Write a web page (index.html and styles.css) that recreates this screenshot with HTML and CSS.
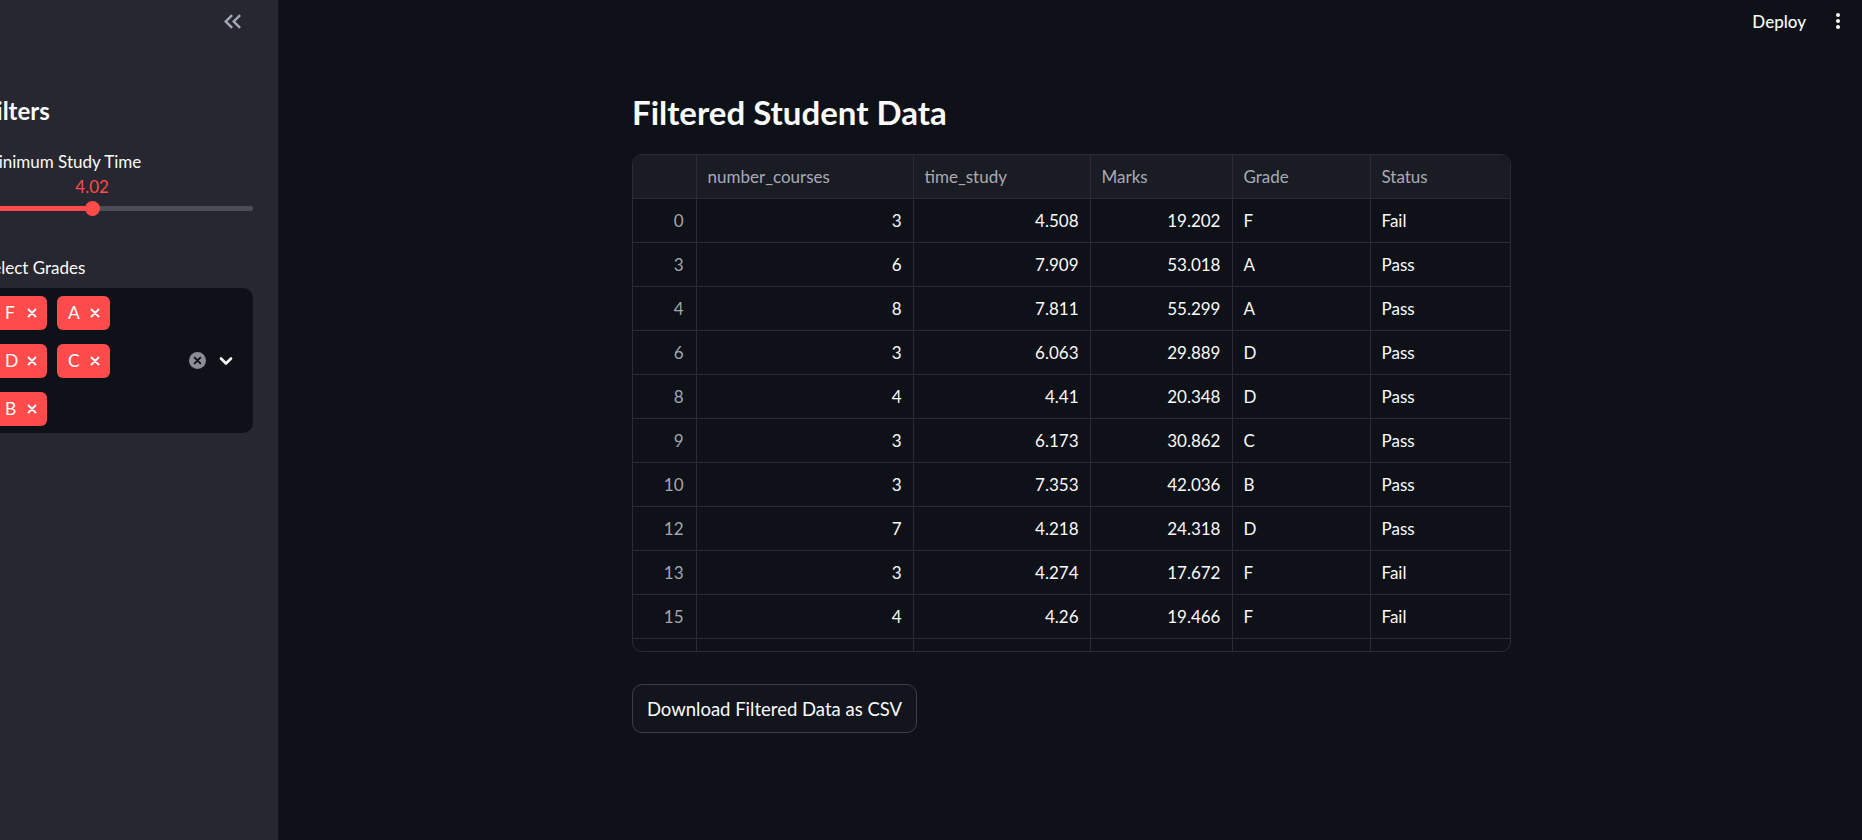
FILE: index.html
```html
<!DOCTYPE html>
<html>
<head>
<meta charset="utf-8">
<link rel="stylesheet" href="styles.css">
</head>
<body>
<aside class="sidebar">
  <div class="sb-top">
    <svg class="collapse" viewBox="0 0 24 24" width="29" height="29"><path d="M17.59 18 19 16.59 14.42 12 19 7.41 17.59 6l-6 6z M11 18l1.41-1.41L7.83 12l4.58-4.59L11 6l-6 6z" fill="currentColor"/></svg>
  </div>
  <div class="sb-content">
    <h2 class="sb-title">Filters</h2>
    <div class="label first">Minimum Study Time</div>
    <div class="slider">
      <div class="track"><div class="fill" style="width:40.4%"></div></div>
      <div class="thumb" style="left:40.4%"></div>
      <div class="value" style="left:40.4%">4.02</div>
    </div>
    <div class="label second">Select Grades</div>
    <div class="multiselect">
      <div class="tags">
        <span class="tag">F<svg class="x" viewBox="0 0 10 10" width="10" height="10"><path d="M1.5 1.5l7 7M8.5 1.5l-7 7" stroke="#fff" stroke-width="1.8" stroke-linecap="round"/></svg></span>
        <span class="tag">A<svg class="x" viewBox="0 0 10 10" width="10" height="10"><path d="M1.5 1.5l7 7M8.5 1.5l-7 7" stroke="#fff" stroke-width="1.8" stroke-linecap="round"/></svg></span>
        <span class="tag">D<svg class="x" viewBox="0 0 10 10" width="10" height="10"><path d="M1.5 1.5l7 7M8.5 1.5l-7 7" stroke="#fff" stroke-width="1.8" stroke-linecap="round"/></svg></span>
        <span class="tag">C<svg class="x" viewBox="0 0 10 10" width="10" height="10"><path d="M1.5 1.5l7 7M8.5 1.5l-7 7" stroke="#fff" stroke-width="1.8" stroke-linecap="round"/></svg></span>
        <span class="tag">B<svg class="x" viewBox="0 0 10 10" width="10" height="10"><path d="M1.5 1.5l7 7M8.5 1.5l-7 7" stroke="#fff" stroke-width="1.8" stroke-linecap="round"/></svg></span>
      </div>
      <div class="ms-icons">
        <svg class="clear" viewBox="0 0 18 18" width="17" height="17"><circle cx="9" cy="9" r="9" fill="#8a8c96"/><path d="M6 6l6 6M12 6l-6 6" stroke="#0e1117" stroke-width="2" stroke-linecap="round"/></svg>
        <svg class="chev" viewBox="0 0 14 10" width="14" height="10"><path d="M2 2.5l5 5 5-5" stroke="#fafafa" stroke-width="2.6" fill="none" stroke-linecap="round" stroke-linejoin="round"/></svg>
      </div>
    </div>
  </div>
</aside>
<main class="main">
  <header class="topbar">
    <span class="deploy">Deploy</span>
    <svg class="kebab" viewBox="0 0 4 16" width="4" height="16"><circle cx="2" cy="2" r="2" fill="#fafafa"/><circle cx="2" cy="8" r="2" fill="#fafafa"/><circle cx="2" cy="14" r="2" fill="#fafafa"/></svg>
  </header>
  <section class="content">
    <h1 class="title">Filtered Student Data</h1>
    <div class="grid-wrap">
      <table class="grid">
        <colgroup>
          <col style="width:63px"><col style="width:217px"><col style="width:177px"><col style="width:142px"><col style="width:138px"><col>
        </colgroup>
        <thead>
          <tr><th></th><th>number_courses</th><th>time_study</th><th>Marks</th><th>Grade</th><th>Status</th></tr>
        </thead>
        <tbody>
          <tr><td class="idx">0</td><td class="num">3</td><td class="num">4.508</td><td class="num">19.202</td><td>F</td><td>Fail</td></tr>
          <tr><td class="idx">3</td><td class="num">6</td><td class="num">7.909</td><td class="num">53.018</td><td>A</td><td>Pass</td></tr>
          <tr><td class="idx">4</td><td class="num">8</td><td class="num">7.811</td><td class="num">55.299</td><td>A</td><td>Pass</td></tr>
          <tr><td class="idx">6</td><td class="num">3</td><td class="num">6.063</td><td class="num">29.889</td><td>D</td><td>Pass</td></tr>
          <tr><td class="idx">8</td><td class="num">4</td><td class="num">4.41</td><td class="num">20.348</td><td>D</td><td>Pass</td></tr>
          <tr><td class="idx">9</td><td class="num">3</td><td class="num">6.173</td><td class="num">30.862</td><td>C</td><td>Pass</td></tr>
          <tr><td class="idx">10</td><td class="num">3</td><td class="num">7.353</td><td class="num">42.036</td><td>B</td><td>Pass</td></tr>
          <tr><td class="idx">12</td><td class="num">7</td><td class="num">4.218</td><td class="num">24.318</td><td>D</td><td>Pass</td></tr>
          <tr><td class="idx">13</td><td class="num">3</td><td class="num">4.274</td><td class="num">17.672</td><td>F</td><td>Fail</td></tr>
          <tr><td class="idx">15</td><td class="num">4</td><td class="num">4.26</td><td class="num">19.466</td><td>F</td><td>Fail</td></tr>
          <tr><td class="idx">16</td><td class="num">5</td><td class="num">5.306</td><td class="num">28.5</td><td>D</td><td>Pass</td></tr>
        </tbody>
      </table>
    </div>
    <button class="dl">Download Filtered Data as CSV</button>
  </section>
</main>
</body>
</html>
```

FILE: styles.css
```css
* { box-sizing: border-box; }
html, body { margin: 0; padding: 0; }
body {
  display: flex;
  height: 840px;
  overflow: hidden;
  background: #0e1117;
  color: #fafafa;
  font-family: "Lato", "Liberation Sans", sans-serif;
}

/* Sidebar */
.sidebar {
  width: 278px;
  flex: none;
  height: 840px;
  background: #262730;
  overflow: hidden;
}
.sb-top {
  height: 42px;
  display: flex;
  justify-content: flex-end;
  align-items: flex-start;
  padding: 7px 31px 0 0;
}
.collapse { color: #a3a8b8; display: block; }
.sb-content {
  margin-left: -17px;
  width: 270px;
}
.sb-title {
  margin: 54px 0 0;
  font-size: 24px;
  line-height: 29px;
  font-weight: 700;
}
.label {
  font-size: 17px;
  line-height: 20px;
}
.label.first { margin-top: 27px; }
.label.second { margin-top: 41px; }
.slider {
  position: relative;
  height: 40px;
  margin-top: 5px;
}
.track {
  position: absolute;
  left: 0; right: 0;
  top: 29px;
  height: 5px;
  border-radius: 3px;
  background: #4b4d57;
}
.fill {
  height: 100%;
  background: #ff4b4b;
  border-radius: 3px 0 0 3px;
}
.thumb {
  position: absolute;
  top: 24px;
  width: 15px;
  height: 15px;
  margin-left: -7.5px;
  border-radius: 50%;
  background: #ff4b4b;
}
.value {
  position: absolute;
  top: 0;
  transform: translateX(-50%);
  font-size: 17px;
  line-height: 20px;
  color: #ff4b4b;
}
.multiselect {
  margin-top: 10px;
  height: 145px;
  background: #0e1117;
  border-radius: 10px;
  display: flex;
  align-items: center;
  padding: 0 20px 0 11px;
}
.tags {
  width: 160px;
  display: flex;
  flex-wrap: wrap;
  gap: 14px 10px;
  align-content: center;
}
.tag {
  height: 34px;
  display: inline-flex;
  align-items: center;
  padding: 0 10px 0 11px;
  background: #ff4b4b;
  color: #fff;
  border-radius: 6px;
  font-size: 17.5px;
  min-width: 53px;
}
.tag .x {
  display: block;
  margin-left: auto;
}
.ms-icons {
  margin-left: auto;
  display: flex;
  align-items: center;
  gap: 13px;
}
.clear, .chev { display: block; }

/* Main */
.main {
  flex: 1;
  display: flex;
  flex-direction: column;
}
.topbar {
  height: 42px;
  display: flex;
  justify-content: flex-end;
  align-items: center;
  padding-right: 22px;
  gap: 30px;
}
.deploy {
  font-size: 17px;
  font-weight: 500;
}
.kebab { display: block; }
.content {
  margin-left: 354px;
  width: 879px;
}
.title {
  margin: 50px 0 0;
  font-size: 33px;
  line-height: 40px;
  font-weight: 700;
}
.grid-wrap {
  margin-top: 22px;
  height: 498px;
  border: 1px solid #2a2c34;
  border-radius: 10px;
  overflow: hidden;
}
.grid {
  width: 100%;
  border-collapse: collapse;
  table-layout: fixed;
  font-size: 17px;
}
.grid th, .grid td {
  height: 44px;
  padding: 0 11px;
  border-right: 1px solid #2a2c34;
  border-bottom: 1px solid #2a2c34;
  white-space: nowrap;
  overflow: hidden;
}
.grid th:last-child, .grid td:last-child { border-right: none; }
.grid th {
  background: #1a1c23;
  color: #a8abb5;
  font-weight: 400;
  text-align: left;
  height: 43px;
}
.grid td { color: #fafafa; }
.grid td.num { text-align: right; }
.grid td.idx { text-align: right; color: #a3a6b0; padding-right: 12px; }
.dl {
  margin-top: 32px;
  height: 49px;
  width: 285px;
  background: #12151c;
  border: 1px solid #3b3e47;
  border-radius: 10px;
  color: #fafafa;
  font-family: inherit;
  font-size: 18.5px;
  padding: 0;
}
```
